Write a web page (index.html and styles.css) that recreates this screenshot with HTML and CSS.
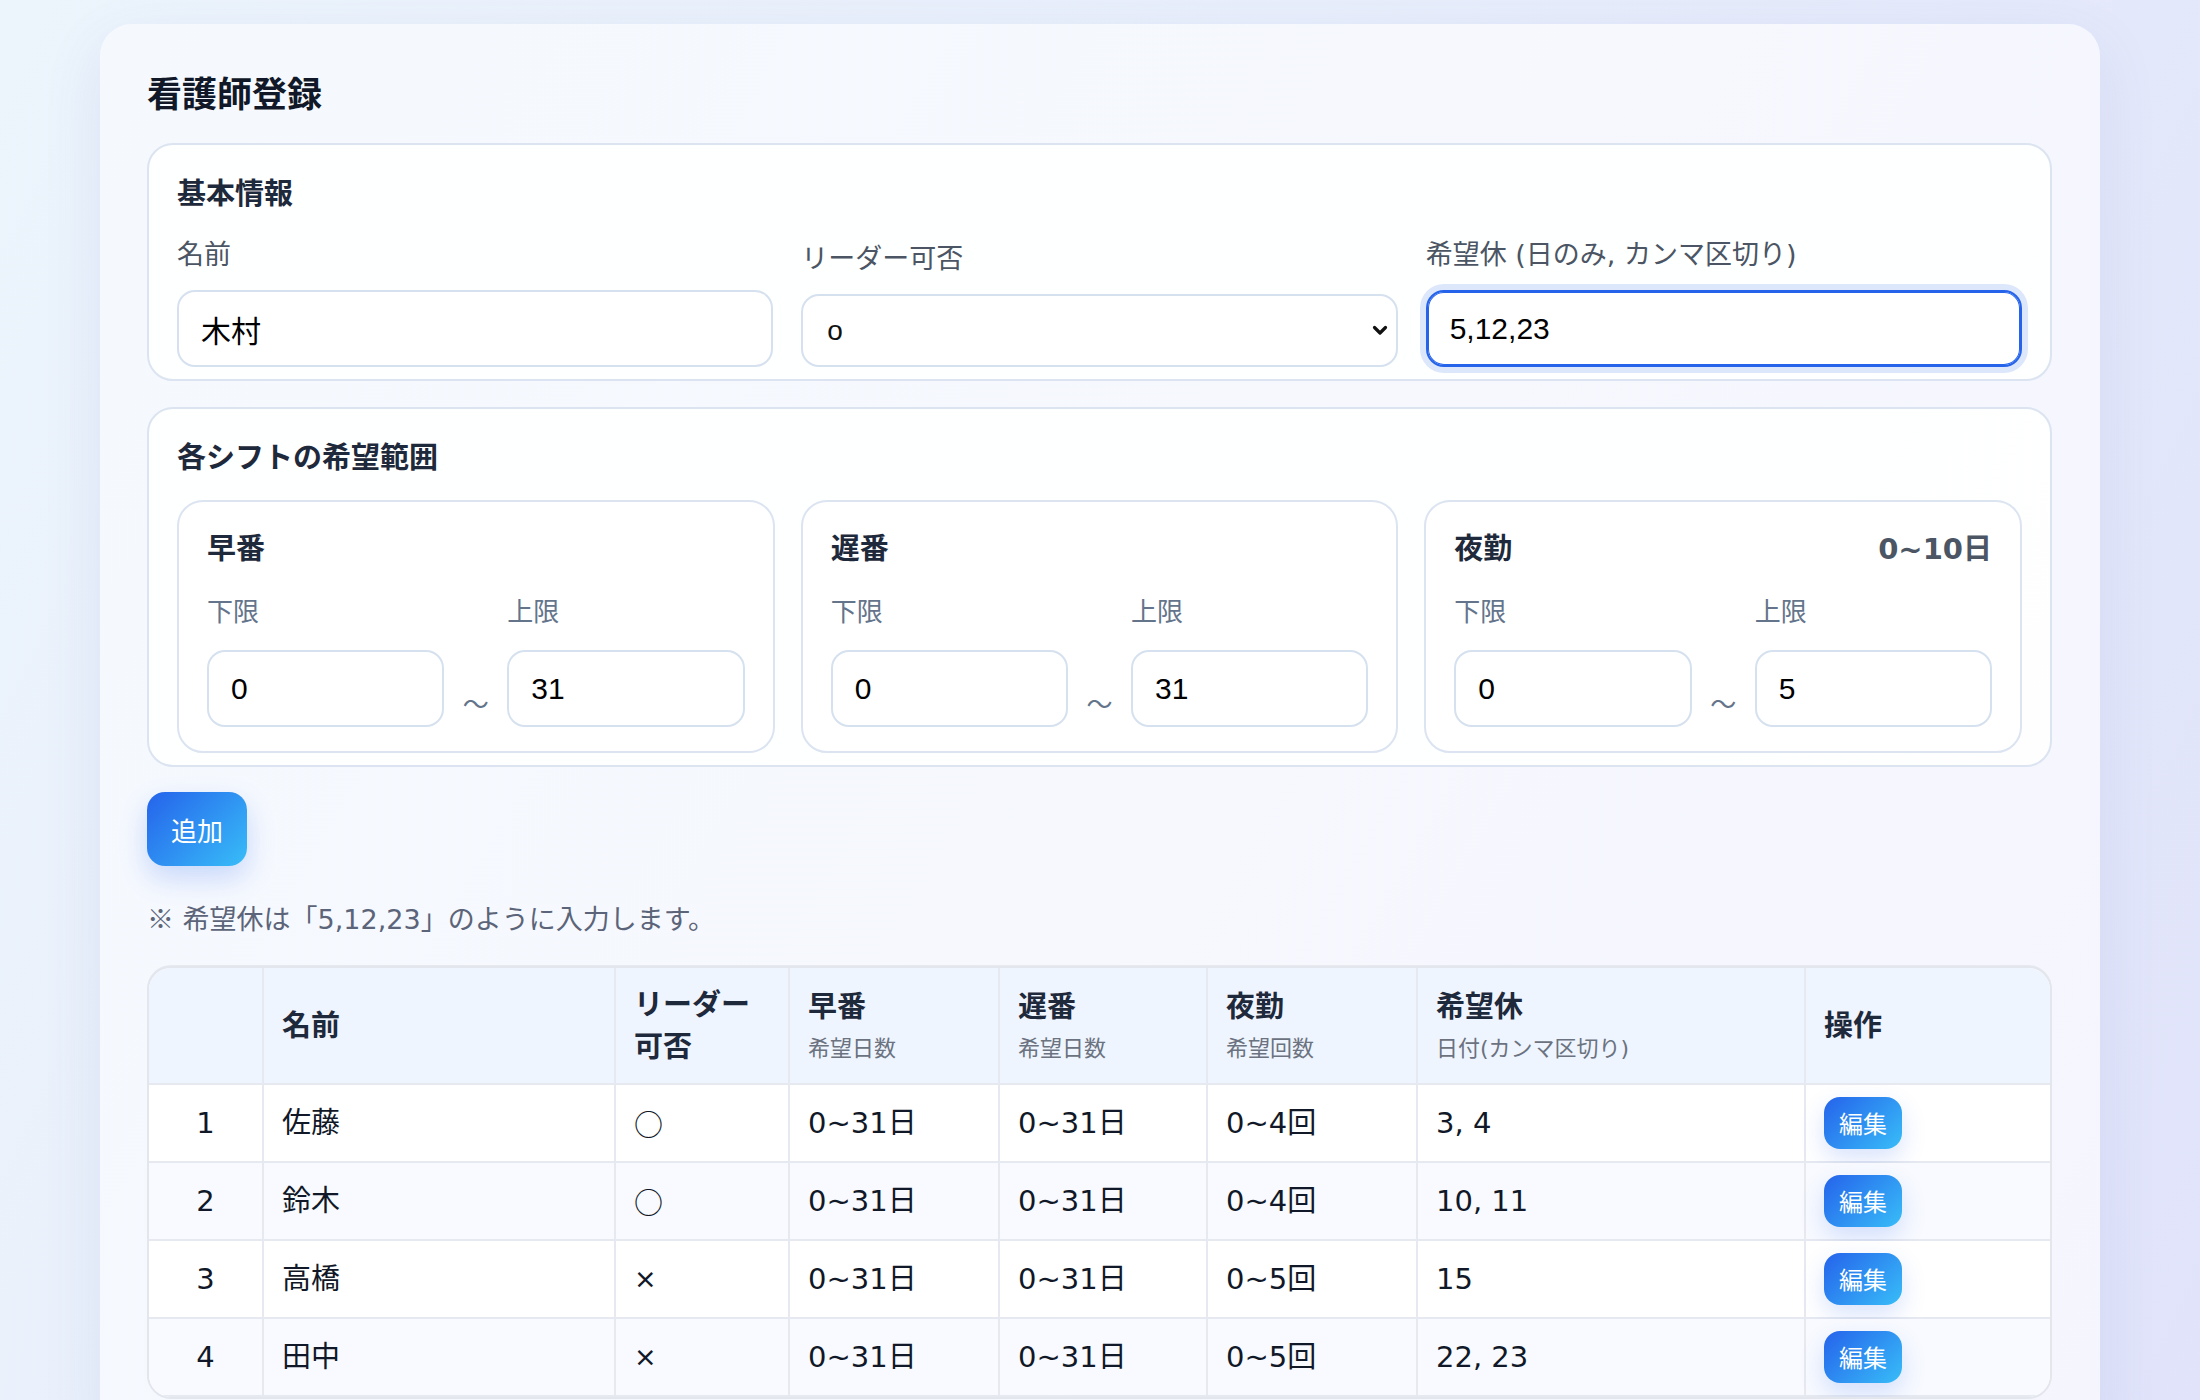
FILE: index.html
```html
<!DOCTYPE html>
<html lang="ja">
<head>
<meta charset="utf-8">
<title>看護師登録</title>
<link rel="stylesheet" href="styles.css">
</head>
<body>
<div class="page">
  <main class="card">
    <h1 class="title">看護師登録</h1>

    <section class="panel">
      <h2 class="panel-title">基本情報</h2>
      <div class="basic-grid">
        <div class="field">
          <label class="label">名前</label>
          <input class="input" type="text" value="木村">
        </div>
        <div class="field">
          <label class="label">リーダー可否</label>
          <div class="select-wrap">
            <select class="select"><option>o</option><option>×</option></select>
            <svg class="chevron" width="16" height="11" viewBox="0 0 16 11"><path d="M2.5 2.5 L8 8 L13.5 2.5" fill="none" stroke="#111" stroke-width="3.2" stroke-linecap="round" stroke-linejoin="round"/></svg>
          </div>
        </div>
        <div class="field">
          <label class="label">希望休 (日のみ, カンマ区切り)</label>
          <input class="input is-focused" type="text" value="5,12,23">
        </div>
      </div>
    </section>

    <section class="panel panel-shifts">
      <h2 class="panel-title">各シフトの希望範囲</h2>
      <div class="shift-grid">
        <div class="shift-card">
          <div class="shift-head"><h3 class="shift-title">早番</h3></div>
          <div class="range">
            <div class="range-field"><label class="range-label">下限</label><input class="input" type="text" value="0"></div>
            <span class="tilde">〜</span>
            <div class="range-field"><label class="range-label">上限</label><input class="input" type="text" value="31"></div>
          </div>
        </div>
        <div class="shift-card">
          <div class="shift-head"><h3 class="shift-title">遅番</h3></div>
          <div class="range">
            <div class="range-field"><label class="range-label">下限</label><input class="input" type="text" value="0"></div>
            <span class="tilde">〜</span>
            <div class="range-field"><label class="range-label">上限</label><input class="input" type="text" value="31"></div>
          </div>
        </div>
        <div class="shift-card">
          <div class="shift-head"><h3 class="shift-title">夜勤</h3><span class="shift-limit">0~10日</span></div>
          <div class="range">
            <div class="range-field"><label class="range-label">下限</label><input class="input" type="text" value="0"></div>
            <span class="tilde">〜</span>
            <div class="range-field"><label class="range-label">上限</label><input class="input" type="text" value="5"></div>
          </div>
        </div>
      </div>
    </section>

    <button class="btn-add" type="button">追加</button>
    <p class="note"><span class="cjk">※</span> 希望休は「5,12,23」のように入力します。</p>

    <div class="table-wrap">
      <table class="nurse-table">
        <colgroup>
          <col class="c-no"><col class="c-name"><col class="c-leader"><col class="c-early"><col class="c-late"><col class="c-night"><col class="c-off"><col class="c-op">
        </colgroup>
        <thead>
          <tr>
            <th></th>
            <th>名前</th>
            <th>リーダー<br>可否</th>
            <th>早番<span class="sub">希望日数</span></th>
            <th>遅番<span class="sub">希望日数</span></th>
            <th>夜勤<span class="sub">希望回数</span></th>
            <th>希望休<span class="sub">日付(カンマ区切り)</span></th>
            <th>操作</th>
          </tr>
        </thead>
        <tbody>
          <tr>
            <td class="no">1</td><td>佐藤</td><td class="mark circle">○</td><td>0~31日</td><td>0~31日</td><td>0~4回</td><td>3, 4</td><td><button class="btn-edit" type="button">編集</button></td>
          </tr>
          <tr>
            <td class="no">2</td><td>鈴木</td><td class="mark circle">○</td><td>0~31日</td><td>0~31日</td><td>0~4回</td><td>10, 11</td><td><button class="btn-edit" type="button">編集</button></td>
          </tr>
          <tr>
            <td class="no">3</td><td>高橋</td><td class="mark">×</td><td>0~31日</td><td>0~31日</td><td>0~5回</td><td>15</td><td><button class="btn-edit" type="button">編集</button></td>
          </tr>
          <tr>
            <td class="no">4</td><td>田中</td><td class="mark">×</td><td>0~31日</td><td>0~31日</td><td>0~5回</td><td>22, 23</td><td><button class="btn-edit" type="button">編集</button></td>
          </tr>
        </tbody>
      </table>
    </div>
  </main>
</div>
</body>
</html>
```

FILE: styles.css
```css
* { box-sizing: border-box; }

html, body {
  margin: 0;
  padding: 0;
}

body {
  font-family: "DejaVu Sans", "Noto Sans CJK JP", sans-serif;
  color: #1e293b;
  background: linear-gradient(115deg, #ecf4fc 0%, #e8eefb 45%, #e0e3fa 100%);
  min-height: 1400px;
}

.page {
  padding: 24px 100px 0;
}

.card {
  background: linear-gradient(120deg, #f5f9fe 0%, #f6f8fe 55%, #f5f5fe 100%);
  border-radius: 32px;
  padding: 43px 48px 47px 47px;
  box-shadow: 0 20px 60px rgba(80, 100, 180, 0.10);
}

.title {
  margin: 0 0 27px;
  font-family: "Noto Sans CJK JP", sans-serif;
  font-size: 35px;
  line-height: 49px;
  font-weight: 700;
  color: #111827;
}

.panel {
  background: rgba(255, 255, 255, 0.9);
  border: 2px solid #dbe4f0;
  border-radius: 26px;
  padding: 28px 28px 12px;
}

.panel-shifts {
  margin-top: 26px;
}

.panel-title {
  margin: 0 0 23px;
  padding-top: 2px;
  font-size: 29px;
  line-height: 38px;
  font-weight: 700;
  color: #1e293b;
}

.basic-grid {
  display: grid;
  grid-template-columns: 1fr 1fr 1fr;
  column-gap: 28px;
  align-items: end;
}

.field {
  display: flex;
  flex-direction: column;
}

.label {
  font-size: 27px;
  line-height: 38px;
  color: #4b5563;
  margin-bottom: 16px;
}

.input {
  width: 100%;
  height: 77px;
  border: 2px solid #d6e1ef;
  border-radius: 18px;
  background: #fff;
  padding: 0 22px;
  font-family: "Liberation Sans", "Noto Sans CJK JP", sans-serif;
  font-size: 30px;
  color: #000;
  outline: none;
}

.input.is-focused {
  border-color: #2563eb;
  box-shadow: 0 0 0 1px #2563eb inset, 0 0 0 6px #dde7fb;
}

.select-wrap {
  position: relative;
}

.select {
  -webkit-appearance: none;
  appearance: none;
  width: 100%;
  height: 73px;
  border: 2px solid #d6e1ef;
  border-radius: 18px;
  background: #fff;
  padding: 0 24px;
  font-family: "Liberation Sans", "Noto Sans CJK JP", sans-serif;
  font-size: 28px;
  font-weight: 300;
  color: #111;
}

.chevron {
  position: absolute;
  right: 10px;
  top: 31px;
  pointer-events: none;
}

.shift-grid {
  display: grid;
  grid-template-columns: 1fr 1fr 1fr;
  column-gap: 26px;
}

.shift-card {
  background: #fff;
  border: 2px solid #dbe4f0;
  border-radius: 26px;
  padding: 28px 28px 24px;
}

.shift-head {
  display: flex;
  justify-content: space-between;
  align-items: center;
  margin-bottom: 25px;
}

.shift-title {
  margin: 0;
  font-size: 29px;
  line-height: 38px;
  font-weight: 700;
  color: #1e293b;
}

.shift-limit {
  font-size: 29px;
  line-height: 38px;
  font-weight: 700;
  color: #4b5563;
}

.range {
  display: grid;
  grid-template-columns: 1fr 63px 1fr;
  align-items: end;
}

.range-field {
  display: flex;
  flex-direction: column;
}

.range-label {
  font-size: 26px;
  line-height: 38px;
  color: #64748b;
  margin-bottom: 19px;
}

.tilde {
  text-align: center;
  font-size: 26px;
  line-height: 36px;
  color: #64748b;
  margin-bottom: 4px;
}

.btn-add {
  display: block;
  margin-top: 25px;
  height: 74px;
  padding: 0 24px;
  border: none;
  border-radius: 18px;
  background: linear-gradient(135deg, #2563eb 0%, #38bdf8 100%);
  color: #fff;
  font-family: "Noto Sans CJK JP", sans-serif;
  font-size: 26px;
  box-shadow: 0 12px 28px rgba(37, 99, 235, 0.22);
}

.note {
  margin: 34px 0 28px;
  font-size: 27px;
  line-height: 36px;
  color: #5b6478;
}

.cjk {
  font-family: "Noto Sans CJK JP", sans-serif;
}

.table-wrap {
  border: 2px solid #e3e6ed;
  border-radius: 24px;
  overflow: hidden;
  background: #fff;
  box-shadow: 0 -1px 0 #e7e9ef;
}

.nurse-table {
  width: 100%;
  table-layout: fixed;
  border-collapse: separate;
  border-spacing: 0;
}

.c-no { width: 115px; }
.c-name { width: 352px; }
.c-leader { width: 174px; }
.c-early { width: 210px; }
.c-late { width: 208px; }
.c-night { width: 210px; }
.c-off { width: 388px; }
.c-op { width: auto; }

.nurse-table th,
.nurse-table td {
  border-right: 2px solid #e6e9f0;
  border-bottom: 2px solid #e6e9f0;
  text-align: left;
  vertical-align: middle;
}

.nurse-table th:last-child,
.nurse-table td:last-child {
  border-right: none;
}

.nurse-table th {
  background: #eff5fe;
  padding: 15px 18px;
  font-size: 29px;
  line-height: 42px;
  font-weight: 700;
  color: #1e293b;
  height: 117px;
}

.sub {
  display: block;
  margin-top: 5px;
  font-size: 22px;
  line-height: 32px;
  font-weight: 400;
  color: #6b7280;
}

.nurse-table tbody tr {
  height: 78px;
}

.nurse-table td {
  padding: 0 18px;
  height: 78px;
  font-size: 29px;
  line-height: 42px;
  color: #111827;
}

.nurse-table tbody tr:nth-child(odd) td { background: #ffffff; }
.nurse-table tbody tr:nth-child(even) td { background: #f8faff; }

.nurse-table td.no {
  text-align: center;
}

.nurse-table td.mark {
  font-size: 27px;
}

.nurse-table td.circle {
  font-family: "Noto Sans CJK JP", sans-serif;
  font-size: 29px;
}

.btn-edit {
  display: block;
  height: 52px;
  padding: 0 15px;
  border: none;
  border-radius: 16px;
  background: linear-gradient(135deg, #2563eb 0%, #38bdf8 100%);
  color: #fff;
  font-family: "Noto Sans CJK JP", sans-serif;
  font-size: 24px;
  line-height: 34px;
  box-shadow: 0 10px 24px rgba(37, 99, 235, 0.18);
}
```
